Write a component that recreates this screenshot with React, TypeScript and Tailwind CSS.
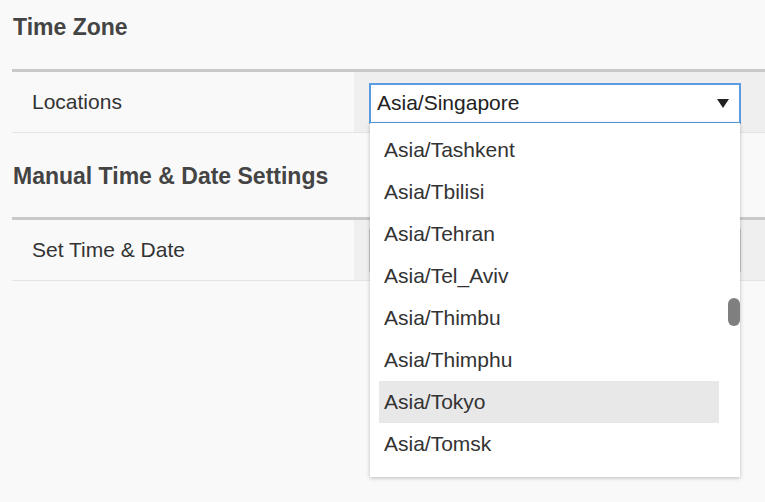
const zones = [
  "Asia/Tashkent",
  "Asia/Tbilisi",
  "Asia/Tehran",
  "Asia/Tel_Aviv",
  "Asia/Thimbu",
  "Asia/Thimphu",
  "Asia/Tokyo",
  "Asia/Tomsk",
  "Asia/Ujung_Pandang",
]

const Row = ({ label, children }: { label: string; children: React.ReactNode }) => (
  <div className="flex h-[61px] border-b border-[#e4e4e4]">
    <div className="flex w-[342px] items-center pl-5 text-[21px] text-[#333]">{label}</div>
    <div className="flex flex-1 items-center bg-[#efefef] pl-[15px] pr-[24px]">{children}</div>
  </div>
)

const App = () => {
  const selected = "Asia/Tokyo"

  return (
    <div className="min-h-screen bg-[#f9f9f9] pl-3 font-['Liberation_Sans',Arial,sans-serif]">
      <h2 className="h-[69px] pt-[14px] pl-[1px] text-[23px] font-bold leading-[26px] text-[#444]">
        Time Zone
      </h2>
      <div className="border-t-[3px] border-[#c9c9c9]">
        <Row label="Locations">
          <div className="relative w-full">
            <div className="mt-[2px] flex h-[41px] w-full items-center justify-between border-2 border-[#5b9be0] bg-white pl-[6px] pr-[10px] text-[21px] text-[#222]">
              <span>Asia/Singapore</span>
              <svg width="12" height="9" viewBox="0 0 12 9">
                <polygon points="0,0 12,0 6,9" fill="#222" />
              </svg>
            </div>
            <div className="absolute left-[1px] right-[1px] top-[42px] z-10 h-[354px] overflow-hidden bg-white pt-[6px] shadow-[0_1px_4px_rgba(0,0,0,0.25)]">
              {zones.map((z) => (
                <div
                  key={z}
                  className={`ml-[9px] mr-[21px] flex h-[42px] items-center pl-[5px] text-[21px] text-[#333] ${
                    z === selected ? "bg-[#e8e8e8]" : ""
                  }`}
                >
                  {z}
                </div>
              ))}
              <div className="absolute right-0 top-[175px] h-[28px] w-[12px] rounded-full bg-[#7f7f7f]" />
            </div>
          </div>
        </Row>
      </div>

      <h2 className="h-[84px] pt-[30px] pl-[1px] text-[23px] font-bold leading-[26px] text-[#444]">
        Manual Time &amp; Date Settings
      </h2>
      <div className="border-t-[3px] border-[#c9c9c9]">
        <Row label="Set Time & Date">
          <div className="h-[43px] w-full border border-[#c8c8c8] bg-white" />
        </Row>
      </div>
    </div>
  )
}

export default App
